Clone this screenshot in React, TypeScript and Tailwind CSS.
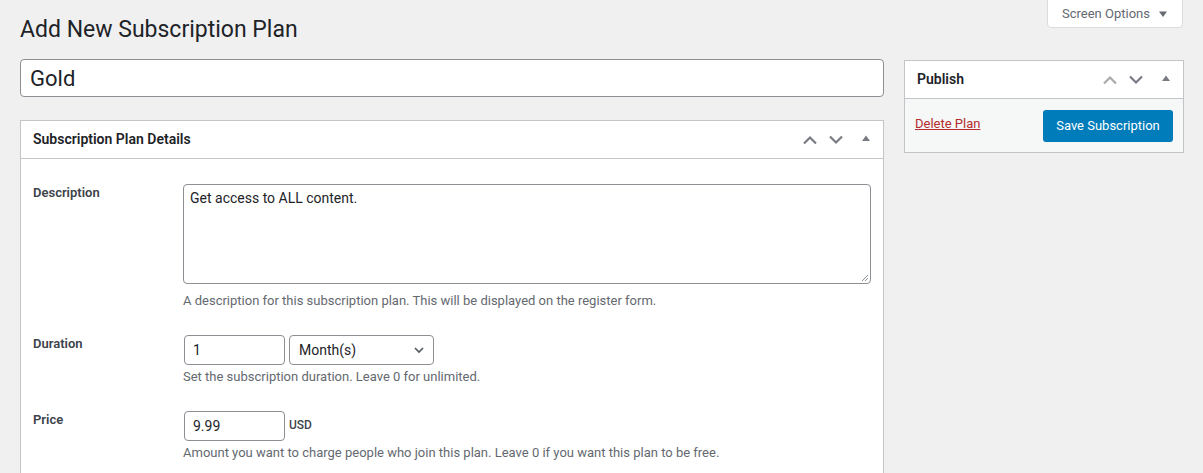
import React from "react";

const Chevron = ({ up, className }: { up?: boolean; className?: string }) => (
  <svg width="16" height="10" viewBox="0 0 16 10" className={className}>
    <polyline
      points={up ? "2,8.5 8,2.5 14,8.5" : "2,1.5 8,7.5 14,1.5"}
      fill="none"
      stroke="currentColor"
      strokeWidth="2.2"
    />
  </svg>
);

const Tri = () => (
  <svg width="10" height="8" viewBox="0 0 10 8" className="text-[#787c82]">
    <polygon points="1,7 5,1.5 9,7" fill="currentColor" />
  </svg>
);

const BoxControls = ({ upLight }: { upLight?: boolean }) => (
  <div className="flex items-center">
    <span className={upLight ? "text-[#a7aaad]" : "text-[#787c82]"}>
      <Chevron up />
    </span>
    <span className="ml-[10px] text-[#787c82]">
      <Chevron />
    </span>
    <span className="ml-[17px] mb-[3px]">
      <Tri />
    </span>
  </div>
);

const Help = ({ children, className }: { children: React.ReactNode; className?: string }) => (
  <p className={"text-[13px] leading-[19px] text-[#646970] " + (className ?? "")}>{children}</p>
);

export default function App() {
  return (
    <div
      className="min-h-[473px] bg-[#f0f0f1] text-[#1d2327]"
      style={{ fontFamily: "Roboto, 'Liberation Sans', sans-serif" }}
    >
      <div className="flex justify-end pr-[20px]">
        <button className="-mt-px flex h-[29px] w-[136px] items-center justify-center gap-[8px] rounded-b-[4px] border border-[#dcdcde] bg-white text-[13px] text-[#646970]">
          Screen Options
          <svg width="10" height="6" viewBox="0 0 10 6">
            <polygon points="1,0.5 9,0.5 5,6" fill="#646970" />
          </svg>
        </button>
      </div>
      <div className="flex gap-[20px] px-[20px]">
        <div className="w-[864px] shrink-0">
          <h1 className="-mt-[13px] text-[23px] leading-[29px] font-normal">Add New Subscription Plan</h1>
          <div className="mt-[15px] flex h-[38px] items-center rounded-[4px] border border-[#8c8f94] bg-white px-[9px] text-[22px]">
            Gold
          </div>
          <div className="mt-[23px] border border-[#c3c4c7] bg-white">
            <div className="flex h-[38px] items-center justify-between border-b border-[#c3c4c7] pl-[12px] pr-[12px]">
              <h2 className="text-[14px] font-semibold">Subscription Plan Details</h2>
              <BoxControls />
            </div>
            <div className="px-[12px] pt-[25px] pb-[20px]">
              <div className="flex">
                <label className="-mt-px w-[150px] shrink-0 text-[13px] font-semibold text-[#3c434a]">Description</label>
                <div className="flex-1">
                  <div className="relative h-[100px] rounded-[4px] border border-[#8c8f94] px-[6px] py-[3px] text-[14px] leading-[20px]">
                    Get access to ALL content.
                    <svg width="8" height="8" viewBox="0 0 8 8" className="absolute right-[1px] bottom-[1px]">
                      <line x1="1" y1="7" x2="7" y2="1" stroke="#8c8f94" />
                      <line x1="4" y1="7" x2="7" y2="4" stroke="#8c8f94" />
                    </svg>
                  </div>
                  <Help className="mt-[7px]">
                    A description for this subscription plan. This will be displayed on the register form.
                  </Help>
                </div>
              </div>
              <div className="mt-[25px] flex">
                <label className="-mt-px w-[150px] shrink-0 text-[13px] font-semibold text-[#3c434a]">Duration</label>
                <div className="flex-1">
                  <div className="flex gap-[4px]">
                    <div className="ml-px flex h-[30px] w-[101px] items-center rounded-[4px] border border-[#8c8f94] px-[8px] text-[14px]">
                      1
                    </div>
                    <div className="flex h-[30px] w-[145px] items-center justify-between rounded-[4px] border border-[#8c8f94] pr-[8px] pl-[9px] text-[14px]">
                      Month(s)
                      <svg width="12" height="8" viewBox="0 0 12 8">
                        <polyline points="2,2 6,6 10,2" fill="none" stroke="#50575e" strokeWidth="1.6" />
                      </svg>
                    </div>
                  </div>
                  <Help className="mt-[2px]">Set the subscription duration. Leave 0 for unlimited.</Help>
                </div>
              </div>
              <div className="mt-[25px] flex">
                <label className="-mt-px w-[150px] shrink-0 text-[13px] font-semibold text-[#3c434a]">Price</label>
                <div className="flex-1">
                  <div className="flex items-center gap-[4px]">
                    <div className="ml-px flex h-[30px] w-[101px] items-center rounded-[4px] border border-[#8c8f94] px-[8px] text-[14px]">
                      9.99
                    </div>
                    <span className="-mt-[3px] text-[12px] font-medium text-[#3c434a]">USD</span>
                  </div>
                  <Help className="mt-[2px]">
                    Amount you want to charge people who join this plan. Leave 0 if you want this plan to be free.
                  </Help>
                </div>
              </div>
            </div>
          </div>
        </div>
        <div className="w-[280px] shrink-0 pt-[32px]">
          <div className="border border-[#c3c4c7] bg-white">
            <div className="flex h-[38px] items-center justify-between border-b border-[#c3c4c7] pl-[12px] pr-[12px]">
              <h2 className="text-[14px] font-semibold">Publish</h2>
              <BoxControls upLight />
            </div>
            <div className="flex items-center justify-between bg-[#f6f7f7] pt-[11px] pb-[10px] pr-[10px] pl-[10px]">
              <a className="-mt-[4px] text-[13px] text-[#b32d2e] underline">Delete Plan</a>
              <button className="h-[32px] w-[130px] rounded-[3px] bg-[#007cba] text-[13px] text-white">
                Save Subscription
              </button>
            </div>
          </div>
        </div>
      </div>
    </div>
  );
}
